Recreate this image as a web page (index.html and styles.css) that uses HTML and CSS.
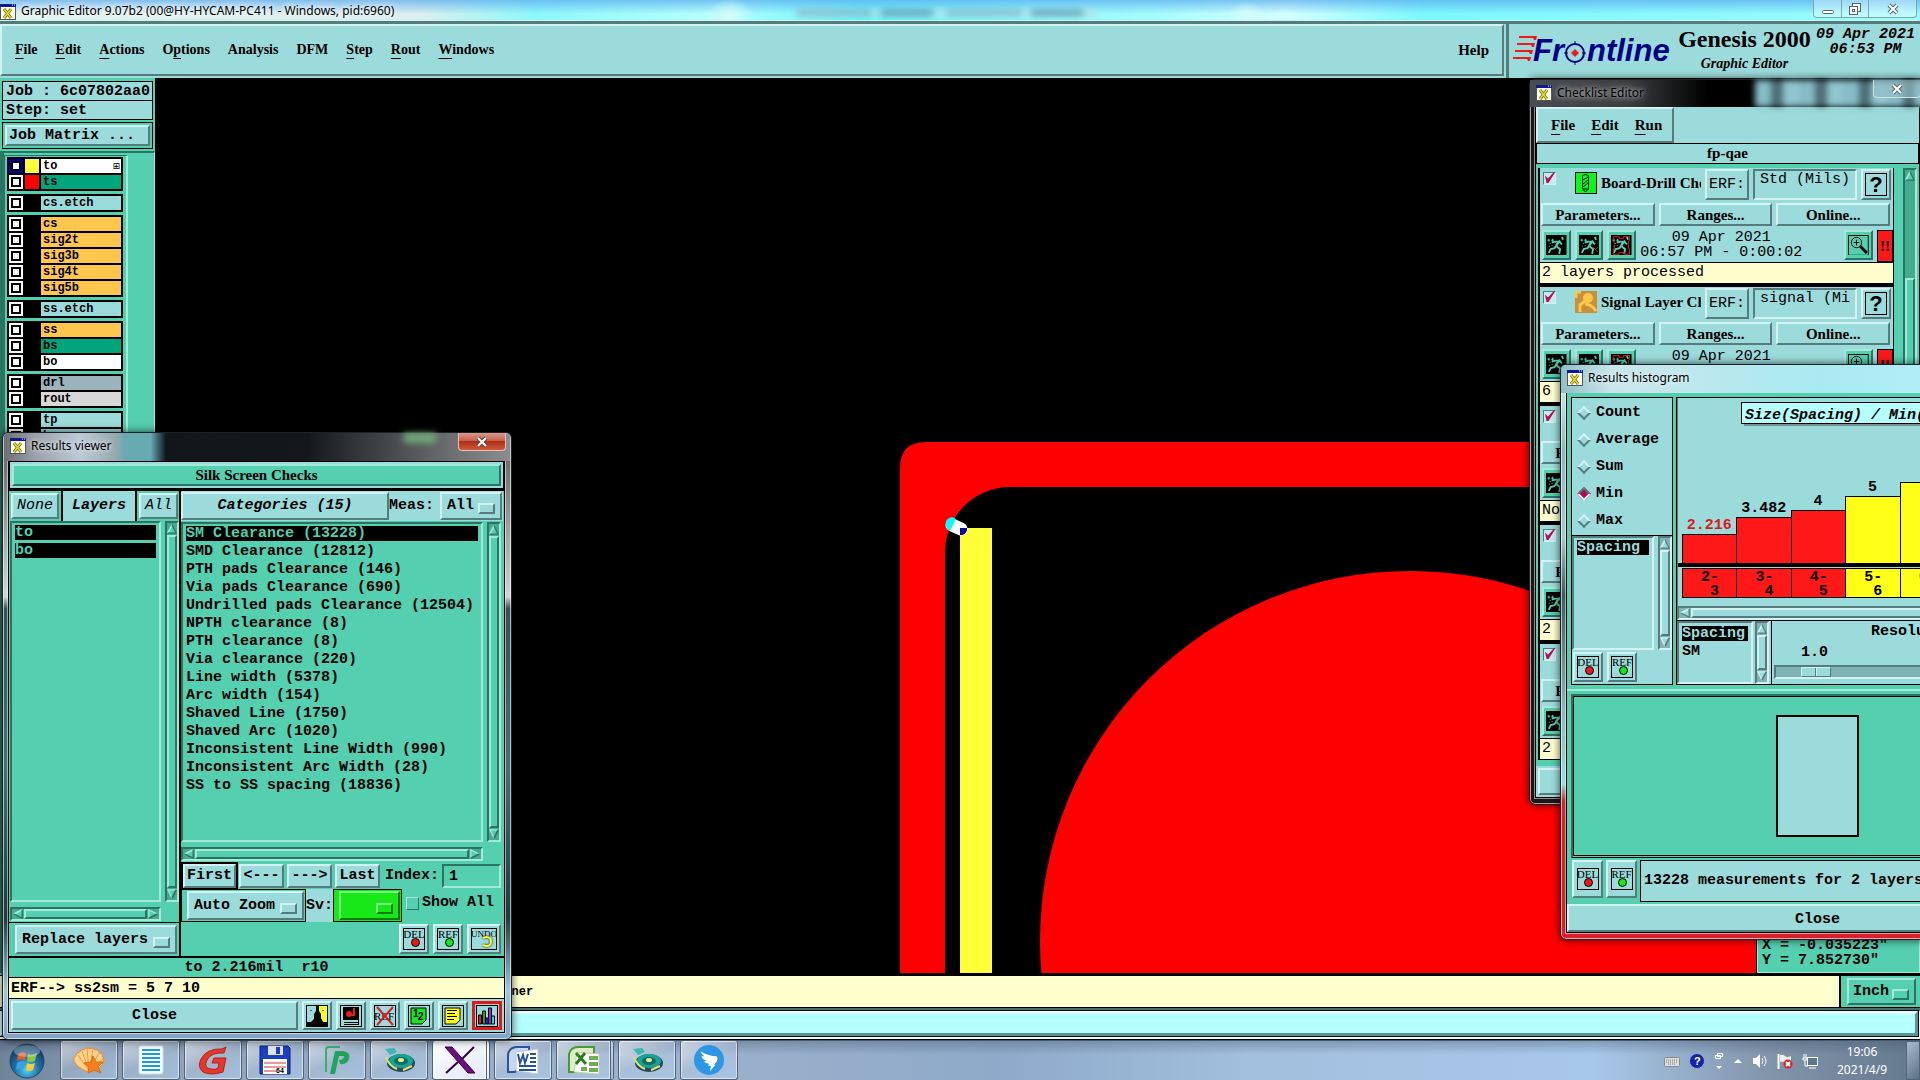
FILE: index.html
```html
<!DOCTYPE html>
<html lang="en">
<head>
  <meta charset="UTF-8">
  <title>Graphic Editor 9.07b2</title>
  <meta name="viewport" content="width=device-width, initial-scale=1.0">
  <link rel="stylesheet" href="styles.css">
</head>
<body>
  <!-- shared icons -->
  <svg class="defs" aria-hidden="true">
    <symbol id="i-x" viewBox="0 0 16 16"><rect x="0.5" y="0.5" width="15" height="15" fill="#fff" stroke="#555"/><rect width="16" height="3" fill="#101890"/><path d="M12 1h1M14 1h1" stroke="#fff"/><path d="M4 5l7 9M11 5l-7 9" stroke="#77740a" stroke-width="3"/><path d="M4 5l7 9M11 5l-7 9" stroke="#e4dc22" stroke-width="1.5"/></symbol>
    <symbol id="i-up" viewBox="0 0 12 12"><path d="M6 1L11 11H1z" fill="var(--bg)"/><path d="M6 1L1 11" stroke="var(--hi)" stroke-width="2"/><path d="M6 1L11 11H1" fill="none" stroke="var(--lo)" stroke-width="1.5"/></symbol>
    <symbol id="i-down" viewBox="0 0 12 12"><path d="M1 1H11L6 11z" fill="var(--bg)"/><path d="M6 11L1 1H11" fill="none" stroke="var(--hi)" stroke-width="1.5"/><path d="M11 1L6 11" stroke="var(--lo)" stroke-width="2"/></symbol>
    <symbol id="i-left" viewBox="0 0 12 12"><path d="M1 6L11 1V11z" fill="var(--bg)"/><path d="M1 6L11 1" stroke="var(--hi)" stroke-width="2"/><path d="M11 1V11L1 6" fill="none" stroke="var(--lo)" stroke-width="1.5"/></symbol>
    <symbol id="i-right" viewBox="0 0 12 12"><path d="M1 1L11 6L1 11z" fill="var(--bg)"/><path d="M1 11V1L11 6" fill="none" stroke="var(--hi)" stroke-width="1.5"/><path d="M11 6L1 11" stroke="var(--lo)" stroke-width="2"/></symbol>
    <symbol id="i-frame" viewBox="0 0 22 22"><rect x="0.5" y="0.5" width="21" height="21" fill="none" stroke="#000"/></symbol>
    <symbol id="i-runner" viewBox="0 0 22 22"><rect width="22" height="22" fill="#000"/><g fill="none" stroke="#54cfb0" stroke-width="2"><path d="M17 2l1 3"/><path d="M15 6l-4 5-2 3-4 1-2 4"/><path d="M6 8l4-1 4 0 3 3"/><path d="M11 12l4 3-1 5"/><path d="M13 7l-2 4"/></g><path d="M3 4v3M1.500 5.500h3M7 4v3M5.500 5.500h3M4 9h1M6 11h1M3 12h1" stroke="#54cfb0"/></symbol>
    <symbol id="i-beetle" viewBox="0 0 32 28"><path d="M2 3l9-1 3 4-7 3z" fill="#37b9b4"/><ellipse cx="18" cy="17" rx="14" ry="9" fill="#274a63"/><ellipse cx="18" cy="15" rx="12" ry="7" fill="#16a594"/><ellipse cx="18" cy="15" rx="7" ry="4" fill="#0d6d6c"/><ellipse cx="18" cy="14" rx="3" ry="2" fill="#f5e97a"/><path d="M3 11q3 9 11 12M20 24l9-4" stroke="#e6e06a" stroke-width="2" fill="none"/></symbol>
  </svg>

  <div class="app">
    <header class="title-bar">
      <svg class="win-icon"><use href="#i-x"/></svg>
      <span class="title-text">Graphic Editor 9.07b2 (00@HY-HYCAM-PC411 - Windows, pid:6960)</span>
      <span class="ghost"></span>
      <div class="win-buttons">
        <button aria-label="Minimize"><svg width="14" height="14"><rect x="1.500" y="8.500" width="11" height="3" rx="1" fill="#fff" stroke="#566"/></svg></button>
        <button aria-label="Restore"><svg width="14" height="14" fill="#fff" stroke="#566"><rect x="4.500" y="1.500" width="8" height="8"/><rect x="1.500" y="4.500" width="8" height="8"/><rect x="4.500" y="7.500" width="2" height="2"/></svg></button>
        <button class="wide" aria-label="Close"><svg width="14" height="14"><path d="M3 3l8 8M11 3l-8 8" stroke="#566" stroke-width="4"/><path d="M3 3l8 8M11 3l-8 8" stroke="#fff" stroke-width="2"/></svg></button>
      </div>
    </header>

    <div class="top">
      <nav class="menu main-menu">
        <button><u>F</u>ile</button>
        <button><u>E</u>dit</button>
        <button><u>A</u>ctions</button>
        <button>O<u>p</u>tions</button>
        <button>Analysis</button>
        <button>DFM</button>
        <button><u>S</u>tep</button>
        <button><u>R</u>out</button>
        <button><u>W</u>indows</button>
        <button class="help">Help</button>
      </nav>
      <div class="brand">
        <svg class="logo" viewBox="0 0 160 34">
          <g fill="#f01818"><path d="M6 4h18l-1 4H21l-1-2H6zM4 11h18l-1 4H19l-1-2H4zM2 18h18l-1 4H17l-1-2H2zM0 25h18l-1 4H15l-1-2H0z"/></g>
          <text x="20" y="29">Fr</text>
          <text x="74" y="29">ntline</text>
          <circle cx="62" cy="21" r="9" fill="none" stroke="#000084" stroke-width="2"/>
          <path d="M62 9v4M62 29v4M51 21h4M69 21h4" stroke="#000084"/>
          <path d="M62 17l4 4-4 4-4-4z" fill="#f01818"/>
        </svg>
        <div class="product">
          <div class="product-name">Genesis 2000</div>
          <div class="product-sub">Graphic Editor</div>
        </div>
        <time class="stamp">09 Apr 2021<br>06:53 PM</time>
      </div>
    </div>

    <div class="work">
      <aside class="sidebar">
        <div class="job">Job : 6c07802aa0</div>
        <div class="job">Step: set</div>
        <div class="matrix"><button class="raised">Job Matrix ...</button></div>
        <div class="layer-wrap">
          <div class="layers" id="layers"></div>
        </div>
      </aside>

      <main class="canvas">
        <svg class="board" viewBox="156 79 1764 896" preserveAspectRatio="xMinYMin slice">
          <clipPath id="view"><rect x="156" y="79" width="1600" height="894"/></clipPath>
          <path fill="#f00" d="M900 973V468Q900 442 926 442H1757V487H1010A65 65 0 0 0 945 552V973z"/>
          <circle cx="1410" cy="941" r="370" fill="#f00" clip-path="url(#view)"/>
          <rect x="960" y="528" width="32" height="445" fill="#ffff39"/>
          <path d="M952 525L961 529" stroke="#fff" stroke-width="13" stroke-linecap="round"/>
          <path d="M956 519L950 531A7 7 0 0 1 946 524A6 6 0 0 1 956 519z" fill="#0ff"/>
          <path d="M960 528H967V530A6 6 0 0 1 960 535z" fill="#00009c"/>
        </svg>
        <div class="coords">X = -0.035223"<br>Y = 7.852730"</div>
      </main>
    </div>

    <div class="status">
      <div class="hint">corner</div>
      <div class="units"><div class="option raised green"><select aria-label="Units"><option>Inch</option></select></div></div>
    </div>
    <div class="command"><input type="text" aria-label="Command line"></div>

    <footer class="taskbar">
      <button class="start" aria-label="Start">
        <svg viewBox="0 0 36 36" width="36" height="36">
          <defs><radialGradient id="orb" cx="50%" cy="75%" r="75%"><stop offset="0" stop-color="#58d6f2"/><stop offset="0.5" stop-color="#1c6ba6"/><stop offset="1" stop-color="#12304f"/></radialGradient></defs>
          <circle cx="18" cy="18" r="17" fill="url(#orb)" stroke="#27465e"/>
          <path d="M9 11q4-3 8-1l-1 7q-4-2-8 1z" fill="#ea5b2b"/><path d="M19 11q4 2 9-1l-2 8q-4 2-8 0z" fill="#8cc63e"/>
          <path d="M8 20q4-3 8-1l-1 7q-4-2-8 1z" fill="#38a3e8"/><path d="M18 20q4 2 8-0l-2 7q-4 2-7 0z" fill="#fccb35"/>
          <ellipse cx="18" cy="8" rx="13" ry="6" fill="#fff" opacity="0.3"/>
        </svg>
      </button>
      <button class="task" aria-label="Files"><svg viewBox="0 0 32 28"><path d="M16 26C4 22 0 16 1 12q2-2 3-5 3 0 4-3 4 0 5-2 4 1 7 0 2 3 5 2 1 4 4 4 1 4 2 6-2 10-15 12z" fill="#fbd28b" stroke="#e88c28"/><path d="M16 25L5 9M16 25L9 5M16 25L14 3M16 25L20 3M16 25L26 7M16 25L30 13" stroke="#ee9a3c"/><path d="M20 10l3 6 7 0-5 5 3 6-7-3-6 3 1-6-5-4 7-1z" fill="#f58220" stroke="#d96a10"/></svg></button>
      <button class="task" aria-label="Notes"><svg viewBox="0 0 32 28"><rect x="4" y="0" width="24" height="28" rx="2" fill="#f6fbff" stroke="#c9dbe8"/><path d="M7 4h18M7 8h18M7 12h18M7 16h18M7 20h18M7 24h18" stroke="#1f9ad6" stroke-width="2"/></svg></button>
      <button class="task" aria-label="Genesis"><svg viewBox="0 0 32 28"><path d="M29 1L27 7Q14 6 10 14T14 23Q19 24 21 22L22 17H15L17 12H29L26 26Q14 30 6 26Q0 21 4 13Q10 2 25 3z" fill="#e5372a" stroke="#b3211c"/></svg></button>
      <button class="task" aria-label="Save"><svg viewBox="0 0 32 28"><path d="M1 0H29L31 2V28H1z" fill="#1b3fc4" stroke="#0c1f7a"/><rect x="9" y="0" width="15" height="9" fill="#dfe5ee"/><rect x="17" y="1" width="4" height="7" fill="#1b3fc4"/><rect x="4" y="13" width="24" height="15" fill="#fff"/><path d="M5 17h22M5 21h22M5 25h12" stroke="#d33"/><text x="17" y="27" class="tiny">64</text></svg></button>
      <button class="task" aria-label="Plot"><svg viewBox="0 0 32 28"><path d="M5 26V4Q5 1 8 1H19" fill="none" stroke="#3aaf6b" stroke-width="2"/><path d="M9 28L14 5H22Q30 6 28 13Q26 19 19 18L18 14Q23 14 23 10H18L14 28z" fill="#22a35c"/></svg></button>
      <button class="task" aria-label="Camtool"><svg><use href="#i-beetle"/></svg></button>
      <button class="task stacked active" aria-label="X server"><svg viewBox="0 0 32 28"><path d="M1 1H8L31 27H24z" fill="#6d0f80" stroke="#340040"/><path d="M30 1L18 13M14 16L2 27" stroke="#340040" stroke-width="2"/></svg></button>
      <button class="task" aria-label="Word"><svg viewBox="0 0 32 28"><path d="M1 26V8Q3 1 10 1H22V10L8 26z" fill="#c8d8f4" stroke="#2a559e" stroke-width="2"/><path d="M9 6L31 3V28L9 25z" fill="#fff" stroke="#b8c6da"/><path d="M11 8l2 9 3-8 2 8 3-9" fill="none" stroke="#24529c" stroke-width="2"/><path d="M23 8h6M23 12h6M23 16h6M12 20h17M12 24h17" stroke="#24529c" stroke-width="2"/></svg></button>
      <button class="task stacked" aria-label="Excel"><svg viewBox="0 0 32 28"><path d="M1 26V8Q3 1 10 1H26V10L8 26z" fill="#dcefc9" stroke="#4c9a2e" stroke-width="2"/><path d="M9 6L31 8V28L6 26z" fill="#fff" stroke="#b9d3a8"/><path d="M8 7l10 11M17 7L8 18" stroke="#2f7d22" stroke-width="3"/><path d="M21 10h9v4h-9zM21 16h9v4h-9zM21 22h9v4h-9zM13 21h6v4h-6z" fill="#6fae55"/></svg></button>
      <button class="task" aria-label="Camtool 2"><svg><use href="#i-beetle"/></svg></button>
      <button class="task" aria-label="Messenger"><svg viewBox="0 0 32 32"><circle cx="16" cy="16" r="16" fill="#2e96e6"/><path d="M7 7Q16 12 24 12Q26 14 24 18L21 21H23L17 28L18 22H15L16 20Q11 19 11 17L14 17Q8 15 8 12L11 12Q7 9 7 7z" fill="#fff"/></svg></button>
      <div class="tray">
        <svg width="16" height="12"><rect x="0.500" y="2.500" width="15" height="9" rx="1" fill="#ddd" stroke="#888"/><path d="M2 5h12M2 7h12M4 9h8" stroke="#777" stroke-dasharray="1 1"/></svg>
        <svg width="16" height="16"><circle cx="8" cy="8" r="7.500" fill="#1424a8" stroke="#9ab"/><text x="5" y="12" class="qmark">?</text></svg>
        <svg width="10" height="18"><path d="M3.500 1.500h5v3h-5zM1.500 3.500h5v3h-5z" fill="none" stroke="#fff"/><path d="M2 14h6l-3 3z" fill="#fff"/></svg>
        <svg width="10" height="8"><path d="M1 6h8l-4-4z" fill="#fff"/></svg>
        <svg width="16" height="16"><path d="M1 5h3l4-4v14l-4-4H1z" fill="#fff"/><path d="M10 5q2 3 0 6M12 3q4 5 0 10" fill="none" stroke="#fff"/></svg>
        <svg width="16" height="16"><path d="M1.500 1v15" stroke="#fff" stroke-width="2"/><path d="M3 2q3-1 5 1t6 0v6q-3 1-6 0t-5 0z" fill="#eee"/><circle cx="11" cy="11" r="4.500" fill="#d8231f"/><path d="M9 9l4 4M13 9l-4 4" stroke="#fff" stroke-width="2"/></svg>
        <svg width="16" height="16"><rect x="5.500" y="4.500" width="10" height="8" fill="#5a7690" stroke="#fff"/><path d="M7 15h7M2 1v4M4 1v4M1 5h4v2H1zM3 7v6h3" stroke="#fff" fill="none"/></svg>
      </div>
      <div class="clock">19:06<br>2021/4/9</div>
      <div class="peek"></div>
    </footer>
  </div>

  <!-- Checklist Editor -->
  <section class="window checklist">
    <div class="caption">
      <svg class="win-icon"><use href="#i-x"/></svg><span>Checklist Editor</span>
      <i class="blur b1"></i>
      <button class="close pale" aria-label="Close"><svg width="14" height="14"><path d="M3 3l8 8M11 3l-8 8" stroke="#566" stroke-width="4"/><path d="M3 3l8 8M11 3l-8 8" stroke="#fff" stroke-width="2"/></svg></button>
    </div>
    <div class="client aqua">
      <nav class="menu raised">
        <button><u>F</u>ile</button>
        <button><u>E</u>dit</button>
        <button><u>R</u>un</button>
      </nav>
      <div class="list-name">fp-qae</div>
      <div class="check-body">
        <div class="checks" id="checks"></div>
        <div class="vscroll green">
          <svg><use href="#i-up"/></svg><b class="thumb"></b>
        </div>
      </div>
      <div class="close-row"><button class="raised" aria-label="Close"></button></div>
    </div>
  </section>

  <!-- Results histogram -->
  <section class="window histogram">
    <div class="caption"><svg class="win-icon"><use href="#i-x"/></svg><span>Results histogram</span></div>
    <div class="client green">
      <div class="histo-top">
        <div class="modes aqua">
          <div class="radios">
            <label><input type="radio" name="mode">Count</label>
            <label><input type="radio" name="mode">Average</label>
            <label><input type="radio" name="mode">Sum</label>
            <label><input type="radio" name="mode" checked>Min</label>
            <label><input type="radio" name="mode">Max</label>
          </div>
          <div class="pick">
            <ul class="list sunken"><li class="on">Spacing</li></ul>
            <div class="vscroll"><svg><use href="#i-up"/></svg><b class="thumb"></b><svg><use href="#i-down"/></svg></div>
          </div>
          <div class="tools">
            <button class="raised ico del"><span>DEL</span></button>
            <button class="raised ico ref"><span>REF</span></button>
          </div>
        </div>
        <div class="chart-side aqua">
          <div class="chart">
            <div class="chart-title">Size(Spacing) / Min(Spacing)</div>
            <div class="bars" id="bars"></div>
            <div class="bins" id="bins"></div>
          </div>
          <div class="hscroll"><svg><use href="#i-left"/></svg><b class="thumb"></b><svg><use href="#i-right"/></svg></div>
          <div class="chart-foot">
            <ul class="list sunken"><li class="on">Spacing</li><li>SM</li></ul>
            <div class="vscroll"><svg><use href="#i-up"/></svg><b class="thumb"></b><svg><use href="#i-down"/></svg></div>
            <div class="resolution">
              <label for="res">Resolution</label>
              <output>1.0</output>
              <input type="range" id="res" min="0" max="10" value="1">
            </div>
          </div>
        </div>
      </div>
      <div class="map"><div class="panel"></div></div>
      <div class="summary">
        <button class="raised ico del aqua"><span>DEL</span></button>
        <button class="raised ico ref aqua"><span>REF</span></button>
        <div class="measure aqua">13228 measurements for 2 layers</div>
      </div>
      <button class="raised aqua wide-close">Close</button>
    </div>
  </section>

  <!-- Results viewer -->
  <section class="window viewer">
    <div class="caption">
      <svg class="win-icon"><use href="#i-x"/></svg><span>Results viewer</span>
      <i class="blur b2"></i>
      <button class="close" aria-label="Close"><svg width="14" height="14"><path d="M3 3l8 8M11 3l-8 8" stroke="#644" stroke-width="4"/><path d="M3 3l8 8M11 3l-8 8" stroke="#fff" stroke-width="2"/></svg></button>
    </div>
    <div class="client green">
      <div class="banner aqua"><div class="raised green">Silk Screen Checks</div></div>
      <div class="split">
        <div class="left">
          <div class="left-head">
            <button class="raised aqua slim">None</button>
            <h2 class="aqua">Layers</h2>
            <button class="raised aqua slim">All</button>
          </div>
          <div class="pick">
            <ul class="list sunken"><li class="on">to</li><li class="on">bo</li></ul>
            <div class="vscroll"><svg><use href="#i-up"/></svg><b class="thumb"></b><svg><use href="#i-down"/></svg></div>
          </div>
          <div class="hscroll"><svg><use href="#i-left"/></svg><b class="thumb"></b><svg><use href="#i-right"/></svg></div>
          <div class="replace"><div class="option raised aqua"><select aria-label="Layer mode"><option>Replace layers</option></select></div></div>
        </div>
        <div class="right">
          <div class="right-head aqua">
            <button class="raised aqua cat">Categories (15)</button>
            <label for="meas">Meas:</label>
            <div class="option raised aqua"><select id="meas"><option>All</option></select></div>
          </div>
          <div class="pick">
            <ul class="list sunken">
              <li class="on">SM Clearance (13228)</li>
              <li>SMD Clearance (12812)</li>
              <li>PTH pads Clearance (146)</li>
              <li>Via pads Clearance (690)</li>
              <li>Undrilled pads Clearance (12504)</li>
              <li>NPTH clearance (8)</li>
              <li>PTH clearance (8)</li>
              <li>Via clearance (220)</li>
              <li>Line width (5378)</li>
              <li>Arc width (154)</li>
              <li>Shaved Line (1750)</li>
              <li>Shaved Arc (1020)</li>
              <li>Inconsistent Line Width (990)</li>
              <li>Inconsistent Arc Width (28)</li>
              <li>SS to SS spacing (18836)</li>
            </ul>
            <div class="vscroll"><svg><use href="#i-up"/></svg><b class="thumb"></b><svg><use href="#i-down"/></svg></div>
          </div>
          <div class="hscroll"><svg><use href="#i-left"/></svg><b class="thumb"></b><svg><use href="#i-right"/></svg></div>
          <div class="nav">
            <button class="raised aqua first">First</button>
            <button class="raised aqua">&lt;---</button>
            <button class="raised aqua">---&gt;</button>
            <button class="raised aqua">Last</button>
            <label for="index">Index:</label>
            <input type="text" id="index" class="sunken" value="1">
          </div>
          <div class="zoom">
            <div class="box"><div class="option raised aqua"><select aria-label="Zoom mode"><option>Auto Zoom</option></select></div></div>
            <label class="sv aqua" for="sev">Sv:</label>
            <div class="box lime"><div class="option raised"><select id="sev"><option value="green" label=" "></option></select></div></div>
            <label class="show-all"><input type="checkbox">Show All</label>
          </div>
          <div class="tools">
            <button class="raised ico del aqua"><span>DEL</span></button>
            <button class="raised ico ref aqua"><span>REF</span></button>
            <button class="raised ico undo aqua"><span>UNDO</span></button>
          </div>
        </div>
      </div>
      <div class="info">to 2.216mil&nbsp; r10</div>
      <div class="erf">ERF--&gt; ss2sm = 5 7 10</div>
      <div class="bottom aqua">
        <button class="raised grow">Close</button>
        <button class="raised pic" aria-label="Compare"><svg viewBox="0 0 22 22"><rect width="22" height="22" fill="#000"/><path d="M1 1h9v5l-2 3v5l-3 3H1z" fill="#9cdbdb"/><path d="M13 1h8v16h-4l-2-4v-4l-2-3z" fill="#ffff18"/><path d="M5 5v1M17 5v1" stroke="#000"/></svg></button>
        <button class="raised pic" aria-label="Snapshot"><svg viewBox="0 0 22 22"><use href="#i-frame"/><rect x="3" y="2" width="15" height="13" fill="#000"/><circle cx="9" cy="9" r="3" fill="#f01818"/><path d="M9 10h5V3" fill="none" stroke="#f01818" stroke-width="2"/><path d="M4 17.500h14M4 19.500h14M18.500 2v18" stroke="#000"/></svg></button>
        <button class="raised pic" aria-label="Clear references"><svg viewBox="0 0 22 22"><use href="#i-frame"/><text x="0" y="15" class="ref-text">REF</text><path d="M3 2l16 18M19 2L3 20" stroke="#e01818" stroke-width="2"/></svg></button>
        <button class="raised pic" aria-label="Number"><svg viewBox="0 0 22 22"><use href="#i-frame"/><path d="M3 3H18V15L14 19H3z" fill="#18e818" stroke="#000"/><text x="5" y="12" class="num">1</text><text x="10" y="15" class="num">2</text></svg></button>
        <button class="raised pic" aria-label="Notes"><svg viewBox="0 0 22 22"><use href="#i-frame"/><path d="M3 3H18V15L14 19H3z" fill="#ffff18" stroke="#000"/><path d="M5 5.500h10M5 8.500h8M5 11.500h10M5 14.500h7" stroke="#000"/></svg></button>
        <button class="raised pic red" aria-label="Histogram"><svg viewBox="0 0 22 22"><use href="#i-frame"/><path d="M2.500 10h3v9h-3z" fill="#f01818" stroke="#000"/><path d="M6.500 6h3v13h-3z" fill="#18a818" stroke="#000"/><path d="M9.500 13h3v6h-3z" fill="#1818e0" stroke="#000"/><path d="M12.500 3h3v16h-3z" fill="#c018c0" stroke="#000"/><path d="M15.500 11h3v8h-3z" fill="#18e0e0" stroke="#000"/></svg></button>
      </div>
    </div>
  </section>

  <script>
    const layerGroups = [
      [["to", "white", "yellow"], ["ts", "mask", "red"]],
      [["cs.etch", "misc"]],
      [["cs", "signal"], ["sig2t", "signal"], ["sig3b", "signal"], ["sig4t", "signal"], ["sig5b", "signal"]],
      [["ss.etch", "misc"]],
      [["ss", "signal"], ["bs", "mask"], ["bo", "white"]],
      [["drl", "drill"], ["rout", "rout"]],
      [["tp", "misc"], ["bp", "misc"]]
    ];
    document.getElementById('layers').innerHTML = layerGroups.map(group =>
      `<div class="group">${group.map(([name, kind, colour]) => `
        <label class="layer ${kind}">
          <input type="checkbox"${name === "to" ? " checked" : ""}>
          <i class="swatch ${colour || ""}"></i>
          <span>${name}${name === "to" ? "<b>⊞</b>" : ""}</span>
        </label>`).join("")}</div>`).join("");

    const drill = `<svg class="kind" viewBox="0 0 22 22"><rect x="0.5" y="0.5" width="21" height="21" fill="#00ff18" stroke="#000"/><path d="M7.500 3.500q3-2 6 0V17l-3 3-3-3z" fill="none" stroke="#000"/><path d="M8 8l5-3M8 12l5-4M8 15l5-4M8 17h5" stroke="#000"/></svg>`;
    const signal = `<svg class="kind" viewBox="0 0 22 22"><rect width="22" height="22" fill="#c8903a"/><circle cx="13" cy="7" r="5" fill="#ffc64e"/><path d="M1 7V1h5M10 10l-5 4v7M10 13q6 0 11 7" fill="none" stroke="#ffc64e" stroke-width="3"/></svg>`;
    const checks = [
      ["Board-Drill Checks", drill, "Std (Mils)", "06:57 PM - 0:00:02", "2 layers processed"],
      ["Signal Layer Checks", signal, "signal (Mi", "06:58 PM - 0:01:42", "6 layers processed"],
      ["Power/Ground Checks", signal, "pg (Mils)", "06:59 PM - 0:00:01", "No layers processed"],
      ["Solder Mask Checks", signal, "sm (Mils)", "06:59 PM - 0:00:41", "2 layers processed"],
      ["Silk Screen Checks", signal, "ss (Mils)", "07:00 PM - 0:00:52", "2 layers processed"]
    ];
    document.getElementById('checks').innerHTML = checks.map(([name, icon, erf, time, msg], i) => `
      <article class="check">
        <div class="check-top">
          <input type="checkbox" id="check${i}" checked>
          ${icon}
          <label for="check${i}">${name}</label>
          <button class="raised erf-btn">ERF:</button>
          <input type="text" class="sunken" value="${erf}" aria-label="ERF model">
          <button class="raised what"><span>?</span></button>
        </div>
        <div class="check-mid">
          <button class="raised">Parameters...</button>
          <button class="raised">Ranges...</button>
          <button class="raised">Online...</button>
        </div>
        <div class="check-run">
          <button class="raised green" aria-label="Run"><svg viewBox="0 0 22 22"><use href="#i-runner"/></svg></button>
          <button class="raised green" aria-label="Run in area"><svg viewBox="0 0 22 22"><use href="#i-runner"/><path d="M15 13l5 5M20 13l-3 3" stroke="#f01818"/></svg></button>
          <button class="raised green" aria-label="Run in profile"><svg viewBox="0 0 22 22"><use href="#i-runner"/><path d="M2.500 1.500h6v2h5v-2h6v5h-1v8h1v6h-5v-2h-6v2h-6v-6h1v-8h-1z" fill="none" stroke="#f01818"/></svg></button>
          <div class="when">09 Apr 2021<br>${time}</div>
          <button class="raised green" aria-label="Results"><svg viewBox="0 0 22 22"><rect x="0.5" y="0.5" width="21" height="21" fill="#54cfb0" stroke="#000"/><circle cx="9" cy="8" r="5.500" fill="none" stroke="#000"/><path d="M9 5v6M6 8h6" stroke="#000"/><path d="M13 12l7 7" stroke="#000" stroke-width="3"/></svg></button>
          <strong class="alert">!!</strong>
        </div>
        <div class="check-msg">${msg}</div>
      </article>`).join("");

    // [smallest value, bar height, colour, bin]
    const bins = [
      ["2.216", 29, "bad", 2], ["3.482", 46, "bad", 3], ["4", 53, "bad", 4],
      ["5", 67, "mid", 5], ["6", 81, "mid", 6], ["7", 95, "good", 7], ["8", 109, "good", 8]
    ];
    document.getElementById('bars').innerHTML = bins.map(([v, h, c], i) =>
      `<div class="bar-col"><span class="${i === 0 ? "worst" : ""}">${v}</span><div class="bar ${c}" style="height:${h}px"></div></div>`).join("");
    document.getElementById('bins').innerHTML = bins.map(([, , c, n]) =>
      `<div class="bin ${c}"><span>${n}-</span><span class="to">${n + 1}</span></div>`).join("");
  </script>
</body>
</html>
```
FILE: styles.css
```css
* {
  box-sizing: border-box;
}
:root {
  --bg: #9cdbdb;
  --hi: #d2f3f1;
  --lo: #557c7d;
}
body {
  margin: 0;
  height: 100vh;
  overflow: hidden;
  background: #000;
  color: #000;
  font: bold 15px/18px "Liberation Mono", monospace;
  position: relative;
}
button, input, select {
  font: inherit;
  color: inherit;
  margin: 0;
  padding: 0;
}
button {
  background: none;
  border: 0;
  white-space: nowrap;
}
ul {
  list-style: none;
  margin: 0;
  padding: 0;
}
svg {
  display: block;
  flex: none;
}
.defs {
  position: absolute;
  width: 0;
  height: 0;
}
.aqua {
  --bg: #9cdbdb;
  --hi: #d2f3f1;
  --lo: #557c7d;
  background: var(--bg);
}
.green {
  --bg: #54cfb0;
  --hi: #a5ead8;
  --lo: #2c7462;
  background: var(--bg);
}
.raised {
  border: 2px solid;
  border-color: var(--hi) var(--lo) var(--lo) var(--hi);
  background: var(--bg);
}
.sunken {
  border: 2px solid;
  border-color: var(--lo) var(--hi) var(--hi) var(--lo);
  background: var(--bg);
}
.win-icon {
  width: 16px;
  height: 16px;
}

/* main window */
.app {
  height: 100vh;
  display: flex;
  flex-direction: column;
}
.title-bar {
  height: 21px;
  flex: none;
  display: flex;
  align-items: center;
  gap: 5px;
  font: 12px/20px "Noto Sans", sans-serif;
  background:
    radial-gradient(ellipse 20px 14px at 1247px 16px, #d5fbf9, transparent),
    radial-gradient(ellipse 24px 18px at 730px 16px, #d5fbf9, transparent),
    linear-gradient(rgba(90, 170, 240, 0.7), transparent 70%),
    linear-gradient(90deg, #e2f3ee, #d9eeee 22%, #8df8fa 28%, #b5fffc 37%, #6cf3fa 45%, #a5fbfc 60%, #d4ffff 67%, #7cf8fc 74%, #9cfbfc);
  border-bottom: 1px solid #c6f5f3;
}
.title-bar .win-icon {
  margin-top: 4px;
}
.title-text {
  padding-top: 2px;
  text-shadow: 0 0 6px #fff, 0 0 6px #fff;
}
.ghost {
  width: 300px;
  height: 6px;
  margin: 6px 0 0 398px;
  background: repeating-linear-gradient(90deg, #8fb8c8 0 74px, #b6dfe6 74px 84px, #6f9cb4 84px 136px, #b6dfe6 136px 150px);
  filter: blur(3px);
}
.win-buttons {
  margin-left: auto;
  margin-right: 3px;
  align-self: flex-start;
  display: flex;
  border: 1px solid #7ca9ad;
  border-top: 0;
  border-radius: 0 0 4px 4px;
  background: rgba(255, 255, 255, 0.35);
}
.win-buttons button {
  width: 27px;
  height: 17px;
  display: flex;
  justify-content: center;
  align-items: center;
  border-left: 1px solid #7ca9ad;
}
.win-buttons button:first-child {
  border-left: 0;
}
.win-buttons .wide {
  width: 48px;
}
.top {
  height: 57px;
  flex: none;
  display: flex;
  background: var(--bg);
  border-top: 3px solid var(--lo);
}
.menu {
  display: flex;
  align-items: center;
  gap: 18px;
  font: bold 14px/18px "Liberation Serif", serif;
}
.menu u {
  text-underline-offset: 4px;
}
.main-menu {
  flex: 1;
  padding: 0 13px;
  border: 2px solid;
  border-color: var(--hi) var(--lo) var(--lo) var(--hi);
  margin-right: 2px;
  margin-bottom: 2px;
}
.menu .help {
  margin-left: auto;
  font-size: 15px;
}
.brand {
  width: 414px;
  display: flex;
  border-left: 3px solid var(--lo);
  padding-left: 4px;
}
.logo {
  width: 160px;
  height: 34px;
  margin-top: 8px;
}
.logo text {
  font: italic bold 31px "Liberation Sans", sans-serif;
  fill: #000084;
}
.product {
  width: 143px;
  text-align: center;
  font-family: "Liberation Serif", serif;
  white-space: nowrap;
}
.product-name {
  font-size: 24px;
  line-height: 30px;
}
.product-sub {
  font-size: 14px;
  line-height: 20px;
  font-style: italic;
}
.stamp {
  font-style: italic;
  line-height: 15px;
  text-align: center;
  padding-top: 3px;
  white-space: nowrap;
}
.work {
  flex: 1;
  min-height: 0;
  display: flex;
}
.sidebar {
  width: 155px;
  background: #54cfb0;
  padding: 3px 2px 2px;
  display: flex;
  flex-direction: column;
}
.job {
  height: 20px;
  margin-bottom: -1px;
  border: 1px solid #000;
  background: var(--bg);
  padding-left: 3px;
  line-height: 19px;
  white-space: nowrap;
}
.matrix {
  border: 1px solid #000;
  padding: 2px;
  margin-top: 3px;
}
.matrix button {
  width: 100%;
  height: 21px;
  text-align: left;
  padding-left: 2px;
  line-height: 17px;
}
.layer-wrap {
  flex: 1;
  min-height: 0;
  margin: 2px -2px 0;
  border-top: 2px solid #2c7462;
  border-left: 4px solid #2c7462;
  border-right: 1px solid #a5ead8;
}
.layers {
  width: 124px;
  height: 100%;
  margin-top: 2px;
  border: solid #2c7462;
  border-width: 1px 0 0 1px;
  border-right: 2px solid #a5ead8;
  padding: 1px 3px 0 2px;
  display: flex;
  flex-direction: column;
  gap: 3px;
  overflow: hidden;
}
.group {
  background: #000;
  padding: 2px;
  display: grid;
  gap: 2px;
}
.layer {
  display: flex;
  gap: 2px;
  height: 14px;
  font-size: 12px;
  line-height: 14px;
}
.layer input {
  appearance: none;
  width: 14px;
  height: 14px;
  background: #fff;
  border: 2px solid #fff;
  box-shadow: inset 0 0 0 2px #000;
  flex: none;
}
.layer input:checked {
  border-color: #0000a8;
}
.layer .swatch {
  width: 14px;
  background: #000;
}
.layer .yellow {
  background: #ffff39;
}
.layer .red {
  background: #f00;
}
.layer span {
  flex: 1;
  padding-left: 2px;
  display: flex;
  justify-content: space-between;
  background: #9cdbdb;
}
.layer b {
  font: 9px/14px "DejaVu Sans", sans-serif;
  padding-right: 1px;
}
.white span {
  background: #fff;
}
.mask span {
  background: #00a57b;
}
.signal span {
  background: #ffc64e;
}
.drill span {
  background: #9cb2bd;
}
.rout span {
  background: #d8d8d8;
}
.canvas {
  flex: 1;
  min-width: 0;
  position: relative;
  background: #000;
  border: solid #000;
  border-width: 1px 0 0 1px;
}
.board {
  width: 100%;
  height: 100%;
}
.coords {
  position: absolute;
  right: 0;
  bottom: 2px;
  width: 163px;
  height: 40px;
  padding: 4px 4px;
  line-height: 15px;
  background: #54cfb0;
  border: 1px solid #a5ead8;
}
.status {
  height: 33px;
  flex: none;
  display: flex;
  border: solid #000;
  border-width: 1px 0 1px;
}
.hint {
  flex: 1;
  background: #ffffce;
  border-right: 2px solid #000;
  padding-left: 490px;
  font-size: 12px;
  line-height: 32px;
}
.units {
  width: 79px;
  padding: 2px 4px 2px 6px;
  background: #54cfb0;
}
.option {
  position: relative;
  display: flex;
  width: 100%;
  height: 100%;
}
.option::after {
  content: "";
  position: absolute;
  right: 5px;
  top: calc(50% - 3px);
  width: 13px;
  height: 7px;
  border: 2px solid;
  border-color: var(--hi) var(--lo) var(--lo) var(--hi);
  pointer-events: none;
}
.option select {
  appearance: none;
  border: 0;
  background: none;
  width: 100%;
  padding-left: 5px;
}
.units select {
  padding-left: 4px;
}
.command {
  height: 32px;
  flex: none;
  background: #dff;
  border-top: 3px solid #4a6b6b;
  padding: 0 2px 3px 0;
  border-bottom: 1px solid #000;
}
.command input {
  display: block;
  width: 100%;
  height: 100%;
  background: #b5ffff;
  border: 3px solid;
  border-color: #dff #5a9494 #5a9494 #dff;
  outline: 1px solid #000;
}

/* taskbar */
.taskbar {
  height: 40px;
  flex: none;
  display: flex;
  gap: 4px;
  align-items: stretch;
  border-top: 1px solid #45586c;
  background: linear-gradient(rgba(60, 80, 105, 0.35), transparent 35%), linear-gradient(90deg, #6f8399, #8ea3ba 8%, #9db2cc 35%, #8ea9c9 52%, #a3bfde 65%, #a8c8ea 83%, #8295ab 92%, #64788e);
}
.start {
  width: 56px;
  padding-left: 9px;
}
.task {
  width: 58px;
  border: 1px solid #4f6176;
  border-top: 0;
  border-radius: 3px;
  box-shadow: inset 0 0 0 1px rgba(255, 255, 255, 0.6);
  background: linear-gradient(155deg, rgba(255, 255, 255, 0.6), rgba(200, 220, 245, 0.3) 50%, rgba(180, 215, 250, 0.5));
  display: flex;
  justify-content: center;
  align-items: center;
}
.task svg {
  width: 32px;
  height: 30px;
}
.stacked {
  border-right: 4px double #4f6176;
}
.active {
  background: linear-gradient(155deg, #fff, #e0e9f6);
}
.tiny {
  font: bold 7px "Liberation Sans", sans-serif;
}
.qmark {
  font: bold 11px "Liberation Sans", sans-serif;
  fill: #fff;
}
.tray {
  margin-left: auto;
  display: flex;
  align-items: center;
  gap: 9px;
}
.clock {
  width: 80px;
  color: #fff;
  font: 12px/18px "Noto Sans", sans-serif;
  text-align: center;
  padding-top: 2px;
}
.peek {
  width: 14px;
  border: 1px solid #51657a;
  background: linear-gradient(135deg, #a9bccd, #5d7186);
}

/* floating windows */
.window {
  position: absolute;
  display: flex;
  flex-direction: column;
  padding: 0 7px 7px;
  border-radius: 6px;
  border: 1px solid #1c2226;
  box-shadow: inset 0 0 0 1px rgba(255, 255, 255, 0.6), 0 0 8px rgba(0, 0, 0, 0.7);
}
.caption {
  height: 28px;
  flex: none;
  display: flex;
  align-items: center;
  gap: 5px;
  position: relative;
  font: 12px/26px "Noto Sans", sans-serif;
  padding-bottom: 2px;
}
.caption span {
  text-shadow: 0 0 8px rgba(255, 255, 255, 0.8), 0 0 4px rgba(255, 255, 255, 0.6);
  z-index: 1;
}
.close {
  position: absolute;
  right: 0;
  top: 0;
  width: 48px;
  height: 18px;
  display: flex;
  justify-content: center;
  align-items: center;
  border: 1px solid #e8c0b8;
  border-top: 0;
  border-radius: 0 0 4px 4px;
  background: linear-gradient(#d99a8c, #c8604c 45%, #b02c14 50%, #cc5a3a);
}
.close.pale {
  right: 4px;
  border-color: #cfe4e6;
  background: rgba(150, 190, 200, 0.6);
}
.blur {
  position: absolute;
  top: 0;
  bottom: 0;
  filter: blur(3px);
}
.client {
  flex: 1;
  min-height: 0;
  display: flex;
  flex-direction: column;
  outline: 1px solid #000;
  box-shadow: 0 0 0 2px rgba(255, 255, 255, 0.5);
}
.vscroll, .hscroll {
  display: flex;
  border: 2px solid;
  border-color: var(--lo) var(--hi) var(--hi) var(--lo);
  background: color-mix(in srgb, var(--bg) 82%, #000);
}
.vscroll {
  flex-direction: column;
  width: 14px;
  flex: none;
}
.hscroll {
  height: 14px;
  flex: none;
}
.vscroll svg {
  width: 10px;
  height: 12px;
}
.hscroll svg {
  width: 12px;
  height: 10px;
}
.thumb {
  flex: 1;
  background: var(--bg);
  border: 2px solid;
  border-color: var(--hi) var(--lo) var(--lo) var(--hi);
}
.pick {
  display: flex;
  gap: 4px;
  flex: 1;
  min-height: 0;
}
.list {
  flex: 1;
  min-width: 0;
  padding: 2px 3px;
  overflow: hidden;
  white-space: nowrap;
}
.list li {
  line-height: 15px;
  margin-bottom: 3px;
}
.list .on {
  background: #000;
  color: var(--bg);
}
.tools {
  display: flex;
  gap: 4px;
}
.ico {
  position: relative;
  width: 30px;
  height: 30px;
  padding: 2px;
  font: 11px/11px "Liberation Serif", serif;
  display: flex;
  justify-content: center;
  align-items: center;
}
.ico span {
  width: 22px;
  height: 22px;
  border: 1px solid #000;
  display: flex;
  justify-content: center;
}
.ico::after {
  content: "";
  position: absolute;
  left: 10px;
  bottom: 5px;
  width: 7px;
  height: 7px;
  border-radius: 50%;
  border: 1px solid #000;
  background: #f01818;
}
.ref::after {
  background: #18e818;
}
.undo {
  width: 34px;
}
.undo span {
  width: 26px;
  font-size: 9px;
}
.undo::after {
  left: 12px;
  border-width: 2px;
  border-color: #ffff18 #ffff18 #ffff18 transparent;
  background: none;
  outline: 0;
  filter: drop-shadow(0 0 1px #000);
}

/* results viewer */
.viewer {
  left: 2px;
  top: 432px;
  width: 510px;
  height: 608px;
  padding-left: 6px;
  background: linear-gradient(#6d7072 5%, #d0d4da 27%, #394f55 29%, #3e7477 55%, #1c3a3f 80%, #9fc6de 92%, #7fa3c4);
}
.viewer .caption {
  margin: 0 -6px 0 -5px;
  padding: 0 6px 2px;
  border-radius: 5px 5px 0 0;
  background: linear-gradient(90deg, #6d7072, #98a0a6 6%, #bccad8 15%, #98a9ae 22%, #67aab2 24%, #67aab2 29%, #10161a 32%, #14181c 60%, #6b6d6f 88%, #8a8c8e);
}
.viewer .b2 {
  left: 400px;
  bottom: 18px;
  width: 32px;
  background: #6ea97a;
}
.viewer .close {
  right: 4px;
}
.banner {
  height: 28px;
  padding: 2px;
  border: 1px solid #000;
}
.banner .raised {
  height: 100%;
  text-align: center;
  font: bold 15px/19px "Liberation Serif", serif;
}
.split {
  flex: 1;
  min-height: 0;
  display: flex;
  border-top: 2px solid #000;
  border-bottom: 2px solid #000;
}
.left {
  width: 172px;
  flex: none;
  border-right: 2px solid #000;
  display: flex;
  flex-direction: column;
}
.left-head {
  display: flex;
  height: 30px;
  padding: 2px 1px 2px 2px;
  gap: 2px;
}
.left-head h2 {
  flex: 1;
  margin: -2px 0;
  border: solid #000;
  border-width: 0 2px;
  font: italic bold 15px/30px "Liberation Mono", monospace;
  text-align: center;
}
.slim {
  font-weight: normal;
  font-style: italic;
  padding: 0 4px;
}
.left .pick, .left .hscroll {
  margin-left: 1px;
}
.left .hscroll, .right .hscroll {
  margin-top: 5px;
  margin-right: 18px;
}
.replace {
  height: 34px;
  margin-top: 1px;
  padding: 2px 2px 2px 6px;
  border-top: 1px solid #000;
}
.right {
  flex: 1;
  min-width: 0;
  display: flex;
  flex-direction: column;
  padding: 0 3px 0 0;
}
.right-head {
  display: flex;
  height: 30px;
  align-items: center;
  padding: 1px 0;
  margin: 0 -2px 1px 0;
}
.cat {
  width: 208px;
  height: 28px;
  font-style: italic;
}
.right-head .option {
  width: 62px;
  margin-left: 6px;
}
.nav {
  display: flex;
  align-items: center;
  gap: 3px;
  height: 26px;
  margin-top: 2px;
  padding-left: 2px;
}
.nav button {
  height: 24px;
  padding: 0 2px;
  width: 45px;
}
.nav .first {
  width: 53px;
  outline: 2px solid #000;
}
.nav label {
  padding-left: 2px;
}
.nav input {
  flex: 1;
  min-width: 0;
  height: 24px;
  padding-left: 5px;
}
.zoom {
  display: flex;
  height: 33px;
}
.box {
  width: 125px;
  border: 1px solid #000;
  padding: 1px 1px 1px 5px;
}
.sv {
  line-height: 33px;
}
.lime {
  --bg: #18e818;
  --hi: #7df77d;
  --lo: #0c7c0c;
  background: var(--bg);
  width: 69px;
}
.show-all {
  display: flex;
  gap: 3px;
  padding: 5px 0 0 4px;
  white-space: nowrap;
}
.show-all input, .check-top input[type="checkbox"] {
  appearance: none;
  width: 13px;
  height: 13px;
  margin-top: 3px;
  border: 1px solid;
  border-color: var(--hi) var(--lo) var(--lo) var(--hi);
}
.right .tools {
  height: 34px;
  justify-content: flex-end;
  align-items: center;
}
.info {
  height: 20px;
  line-height: 20px;
  text-align: center;
  border-bottom: 1px solid #000;
}
.erf {
  height: 21px;
  line-height: 21px;
  background: #ffffce;
  border-bottom: 1px solid #000;
  padding-left: 2px;
}
.bottom {
  display: flex;
  gap: 4px;
  padding: 2px;
  height: 33px;
}
.grow {
  flex: 1;
}
.pic {
  width: 30px;
  display: flex;
  justify-content: center;
  align-items: center;
}
.pic svg {
  width: 22px;
  height: 22px;
}
.pic.red {
  border-color: #e01818;
  border-width: 3px;
}
.ref-text {
  font: 11px "Liberation Serif", serif;
}
.num {
  font: bold 10px "Liberation Sans", sans-serif;
}

/* checklist editor */
.checklist {
  left: 1529px;
  top: 79px;
  width: 398px;
  height: 726px;
  padding-left: 6px;
  background: #1c1618;
}
.checklist .caption {
  height: 27px;
  background: linear-gradient(90deg, #4a4d50, #3a3c3e 25%, #000 45%);
  margin: 0 -6px;
  padding-left: 6px;
}
.checklist .b1 {
  left: 225px;
  right: 0;
  background: repeating-linear-gradient(90deg, #86bcc7 0 16px, #4b6d76 16px 28px, #8fc6d0 28px 44px);
}
.checklist .menu {
  width: 138px;
  height: 36px;
  padding-left: 13px;
  gap: 16px;
  font-size: 15px;
}
.list-name {
  height: 21px;
  text-align: center;
  border: 1px solid #000;
  font: bold 15px/19px "Liberation Serif", serif;
}
.check-body {
  flex: 1;
  min-height: 0;
  display: flex;
  gap: 9px;
  padding: 4px 2px 6px;
  background: #54cfb0;
}
.checks {
  flex: 1;
  min-width: 0;
  overflow: hidden;
  border-left: 1px solid #000;
}
.check-body .vscroll .thumb {
  margin-top: 96px;
}
.check {
  background: var(--bg);
  height: 119px;
  display: flex;
  flex-direction: column;
  border: solid #000;
  border-width: 0 1px 4px;
  padding-top: 1px;
}
.check-top {
  display: flex;
  height: 31px;
  padding-left: 3px;
  gap: 4px;
}
.check-top .kind {
  width: 22px;
  height: 22px;
  margin: 3px 0 0 15px;
}
.check-top input[type="checkbox"] {
  background: #c3ecec;
  position: relative;
  border-color: var(--lo) var(--hi) var(--hi) var(--lo);
  flex: none;
}
.check-top input:checked::after {
  content: "";
  position: absolute;
  left: 1px;
  top: -1px;
  width: 10px;
  height: 11px;
  background: #b5105a;
  clip-path: polygon(0 35%, 30% 60%, 90% 0, 100% 5%, 35% 100%, 15% 100%);
}
.check-top label {
  width: 100px;
  flex: none;
  overflow: hidden;
  white-space: nowrap;
  font: bold 15px/28px "Liberation Serif", serif;
}
.erf-btn {
  width: 44px;
  flex: none;
  font-weight: normal;
}
.check-top input[type="text"] {
  width: 104px;
  height: 31px;
  flex: none;
  font-weight: normal;
  padding: 0 0 10px 5px;
}
.what {
  width: 30px;
  padding: 1px;
  display: flex;
  justify-content: center;
  align-items: center;
}
.what span {
  width: 22px;
  height: 23px;
  border: 1px solid #000;
  font: bold 22px/21px "Liberation Sans", sans-serif;
}
.check-mid {
  display: flex;
  gap: 4px;
  padding: 3px 3px 4px 1px;
}
.check-mid button {
  flex: 1;
  height: 23px;
  font: bold 15px/18px "Liberation Serif", serif;
}
.check-run {
  display: flex;
  gap: 4px;
  padding-left: 2px;
  height: 32px;
}
.check-run button {
  width: 30px;
  height: 30px;
  padding: 2px;
}
.when {
  flex: 1;
  text-align: center;
  font-weight: normal;
  line-height: 15px;
  white-space: nowrap;
  padding-right: 38px;
}
.alert {
  width: 17px;
  background: #ff1818;
  border: 1px solid #000;
  font: bold 15px/30px "Liberation Serif", serif;
  text-align: center;
}
.check-msg {
  height: 21px;
  line-height: 20px;
  font-weight: normal;
  background: #ffffce;
  border-top: 1px solid #000;
  padding-left: 2px;
}
.close-row {
  height: 31px;
  padding: 2px;
}
.close-row button {
  width: 100%;
  height: 27px;
}

/* histogram */
.histogram {
  left: 1560px;
  top: 364px;
  width: 516px;
  height: 576px;
  padding-left: 6px;
  background: linear-gradient(#bfe3e8 5%, #8db7be 15%, #a9c8cc 30%, #3e5a60 40%, #8ab6bc 60%, #9adbe4 73%, #d8202c 76%, #d8202c);
}
.histogram .caption {
  margin: 0 -6px;
  padding-left: 6px;
  border-radius: 5px 0 0 0;
  background: linear-gradient(90deg, #8fc0c6, #c9e6ea 10%, #a9eaf2 50%, #b8f4fb);
}
.histo-top {
  display: flex;
  gap: 3px;
  padding: 4px;
  border-bottom: 2px solid #a5ead8;
  height: 298px;
}
.modes {
  width: 102px;
  flex: none;
  display: flex;
  flex-direction: column;
  border: 1px solid #000;
}
.radios {
  padding: 1px 0;
  border-bottom: 1px solid #000;
}
.radios label {
  display: flex;
  align-items: center;
  height: 27px;
  gap: 7px;
  padding-left: 7px;
}
.radios input {
  appearance: none;
  width: 10px;
  height: 10px;
  border: 2px solid;
  border-color: var(--hi) var(--lo) var(--lo) var(--hi);
  transform: rotate(45deg);
}
.radios input:checked {
  background: #bd0052;
  border-color: var(--lo) var(--hi) var(--hi) var(--lo);
}
.modes .tools {
  padding: 2px 1px;
}
.chart-side {
  flex: 1;
  min-width: 0;
  display: flex;
  flex-direction: column;
  border: 1px solid #000;
}
.chart {
  flex: 1;
  display: flex;
  flex-direction: column;
  padding-top: 4px;
  border-left: 1px solid var(--lo);
}
.chart-title {
  margin-left: 63px;
  margin-right: 64px;
  padding-left: 3px;
  height: 22px;
  line-height: 26px;
  font-style: italic;
  background: #b5ffff;
  border: 1px solid #000;
  box-shadow: 3px 2px 0 #7c8f8f;
  white-space: nowrap;
}
.bars {
  flex: 1;
  display: flex;
  align-items: flex-end;
  padding-left: 4px;
  border-bottom: 4px solid #000;
}
.bar-col {
  width: 55px;
  text-align: center;
  line-height: 16px;
}
.bar {
  border: solid #000;
  border-width: 1px 0 0 1px;
}
.bad {
  background: #ff1818;
}
.mid {
  background: #ffff18;
}
.good {
  background: #18e818;
}
.worst {
  color: #e01818;
}
.bins {
  display: flex;
  padding: 1px 0 8px 4px;
}
.bin {
  width: 55px;
  height: 30px;
  padding: 2px 0 0 18px;
  line-height: 14px;
  border: solid #000;
  border-width: 1px 0 1px 1px;
  display: flex;
  flex-direction: column;
}
.bin .to {
  padding-left: 9px;
}
.chart-foot {
  display: flex;
  gap: 2px;
  height: 64px;
  border-top: 1px solid #000;
}
.chart-foot .list {
  flex: none;
  width: 76px;
  padding-top: 3px;
}
.resolution {
  flex: 1;
  display: grid;
  grid-template-columns: 1fr;
  border-left: 1px solid #000;
  padding: 2px;
}
.resolution label {
  padding-left: 97px;
}
.resolution output {
  padding-left: 27px;
}
.resolution input {
  appearance: none;
  width: 100%;
  height: 14px;
  background: #7fb3b3;
  border: 2px solid;
  border-color: var(--lo) var(--hi) var(--hi) var(--lo);
}
.resolution input::-webkit-slider-thumb {
  appearance: none;
  width: 30px;
  height: 10px;
  background: linear-gradient(90deg, transparent 13px, var(--lo) 13px 14px, var(--hi) 14px 15px, transparent 15px), var(--bg);
  border: 1px solid;
  border-color: var(--hi) var(--lo) var(--lo) var(--hi);
}
.map {
  flex: 1;
  margin: 3px 4px 0;
  border: solid;
  border-width: 2px 2px 1px;
  border-color: #2c7462 #a5ead8 #000 #2c7462;
  outline: 1px solid #000;
  outline-offset: -3px;
  padding: 19px 0 0 203px;
}
.panel {
  width: 83px;
  height: 122px;
  background: #9cdbdb;
  border: 2px solid #000;
}
.summary {
  display: flex;
  gap: 3px;
  height: 46px;
  padding: 2px 5px;
}
.summary .ico {
  height: 38px;
  width: 31px;
}
.summary .ico::after {
  bottom: 9px;
}
.measure {
  flex: 1;
  border: 1px solid #000;
  line-height: 40px;
  padding-left: 3px;
}
.wide-close {
  height: 28px;
  padding-top: 3px;
}
```
